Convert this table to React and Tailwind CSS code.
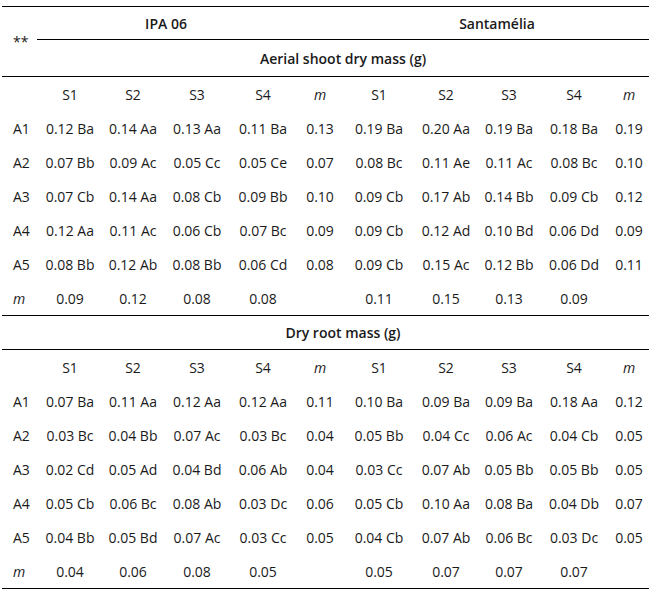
import React from "react";

const grid =
  "grid grid-cols-[35px_66px_60px_68px_64px_50px_68px_66px_60px_70px_40px]";

const block1 = [
  ["A1", "0.12 Ba", "0.14 Aa", "0.13 Aa", "0.11 Ba", "0.13", "0.19 Ba", "0.20 Aa", "0.19 Ba", "0.18 Ba", "0.19"],
  ["A2", "0.07 Bb", "0.09 Ac", "0.05 Cc", "0.05 Ce", "0.07", "0.08 Bc", "0.11 Ae", "0.11 Ac", "0.08 Bc", "0.10"],
  ["A3", "0.07 Cb", "0.14 Aa", "0.08 Cb", "0.09 Bb", "0.10", "0.09 Cb", "0.17 Ab", "0.14 Bb", "0.09 Cb", "0.12"],
  ["A4", "0.12 Aa", "0.11 Ac", "0.06 Cb", "0.07 Bc", "0.09", "0.09 Cb", "0.12 Ad", "0.10 Bd", "0.06 Dd", "0.09"],
  ["A5", "0.08 Bb", "0.12 Ab", "0.08 Bb", "0.06 Cd", "0.08", "0.09 Cb", "0.15 Ac", "0.12 Bb", "0.06 Dd", "0.11"],
  ["m", "0.09", "0.12", "0.08", "0.08", "", "0.11", "0.15", "0.13", "0.09", ""],
];

const block2 = [
  ["A1", "0.07 Ba", "0.11 Aa", "0.12 Aa", "0.12 Aa", "0.11", "0.10 Ba", "0.09 Ba", "0.09 Ba", "0.18 Aa", "0.12"],
  ["A2", "0.03 Bc", "0.04 Bb", "0.07 Ac", "0.03 Bc", "0.04", "0.05 Bb", "0.04 Cc", "0.06 Ac", "0.04 Cb", "0.05"],
  ["A3", "0.02 Cd", "0.05 Ad", "0.04 Bd", "0.06 Ab", "0.04", "0.03 Cc", "0.07 Ab", "0.05 Bb", "0.05 Bb", "0.05"],
  ["A4", "0.05 Cb", "0.06 Bc", "0.08 Ab", "0.03 Dc", "0.06", "0.05 Cb", "0.10 Aa", "0.08 Ba", "0.04 Db", "0.07"],
  ["A5", "0.04 Bb", "0.05 Bd", "0.07 Ac", "0.03 Cc", "0.05", "0.04 Cb", "0.07 Ab", "0.06 Bc", "0.03 Dc", "0.05"],
  ["m", "0.04", "0.06", "0.08", "0.05", "", "0.05", "0.07", "0.07", "0.07", ""],
];

const heads = ["", "S1", "S2", "S3", "S4", "m", "S1", "S2", "S3", "S4", "m"];

function Row({ cells }) {
  return (
    <div className={grid}>
      {cells.map((c, i) => {
        const italic = c === "m";
        if (i === 0) {
          return (
            <div
              key={i}
              className={`h-[34px] flex items-center pl-[11px] ${italic ? "italic" : ""}`}
            >
              {c}
            </div>
          );
        }
        return (
          <div
            key={i}
            className={`h-[34px] flex items-center justify-center whitespace-nowrap ${italic ? "italic" : ""}`}
          >
            {c}
          </div>
        );
      })}
    </div>
  );
}

export default function App() {
  return (
    <div
      className="bg-white w-[651px] h-[593px] pt-[6px] pl-[2px] text-[14px] text-[#1a1a1a]"
      style={{ fontFamily: '"Open Sans", "Noto Sans", sans-serif' }}
    >
      <div className="w-[647px]">
        <div className={`${grid} border-t border-[#000]`}>
          <div className="row-span-2 flex items-center pl-[11px] border-b border-[#000]">**</div>
          <div className="col-span-4 h-[33px] flex items-center justify-center font-semibold border-b border-[#000]">
            IPA 06
          </div>
          <div className="h-[33px] border-b border-[#000]"></div>
          <div className="col-span-5 h-[33px] flex items-center justify-center font-semibold border-b border-[#000]">
            Santamélia
          </div>
          <div className="col-span-10 h-[37px] flex items-center justify-center font-semibold border-b border-[#000]">
            Aerial shoot dry mass (g)
          </div>
        </div>
        <Row cells={heads} />
        {block1.map((r, i) => (
          <Row key={i} cells={r} />
        ))}
        <div className={`${grid} border-t border-b border-[#000]`}>
          <div className="h-[33px]"></div>
          <div className="col-span-10 h-[33px] flex items-center justify-center font-semibold">
            Dry root mass (g)
          </div>
        </div>
        <Row cells={heads} />
        {block2.map((r, i) => (
          <Row key={i} cells={r} />
        ))}
        <div className="border-t border-[#000]"></div>
      </div>
    </div>
  );
}
